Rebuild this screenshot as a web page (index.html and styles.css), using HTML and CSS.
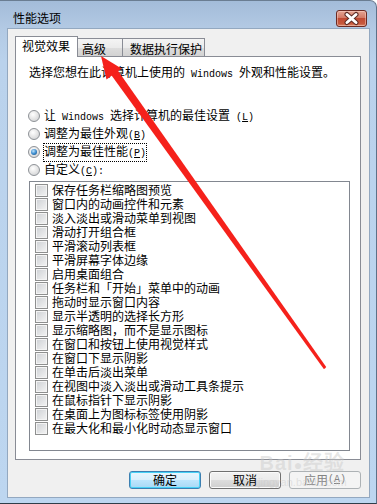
FILE: index.html
```html
<!DOCTYPE html>
<html lang="zh-CN">
<head>
<meta charset="utf-8">
<title>性能选项</title>
<link rel="stylesheet" href="styles.css">
</head>
<body>
<div class="window">
  <div class="titlebar">
    <span class="title">性能选项</span>
    <div class="close">
      <svg width="29" height="15" viewBox="0 0 29 15">
        <path d="M10 3.5 L19 11.5 M19 3.5 L10 11.5" stroke="#5b2a24" stroke-width="5" stroke-linecap="round"/>
        <path d="M10 3.5 L19 11.5 M19 3.5 L10 11.5" stroke="#ffffff" stroke-width="3" stroke-linecap="round"/>
      </svg>
    </div>
  </div>
  <div class="client">
    <div class="tabs">
      <div class="tab active">视觉效果</div>
      <div class="tab t2">高级</div>
      <div class="tab t3">数据执行保护</div>
    </div>
    <div class="panel">
      <p class="intro">选择您想在此计算机上使用的<span class="lat"> Windows </span>外观和性能设置。</p>
      <div class="radios">
        <div class="radio"><span class="rb"></span><span class="rl">让<span class="lat"> Windows </span>选择计算机的最佳设置<span class="lat"> (<u>L</u>)</span></span></div>
        <div class="radio"><span class="rb"></span><span class="rl">调整为最佳外观<span class="lat">(<u>B</u>)</span></span></div>
        <div class="radio"><span class="rb on"></span><span class="rl focus">调整为最佳性能<span class="lat">(<u>P</u>)</span></span></div>
        <div class="radio"><span class="rb"></span><span class="rl">自定义<span class="lat">(<u>C</u>):</span></span></div>
      </div>
      <div class="list">
        <div class="item"><span class="cb"></span>保存任务栏缩略图预览</div>
        <div class="item"><span class="cb"></span>窗口内的动画控件和元素</div>
        <div class="item"><span class="cb"></span>淡入淡出或滑动菜单到视图</div>
        <div class="item"><span class="cb"></span>滑动打开组合框</div>
        <div class="item"><span class="cb"></span>平滑滚动列表框</div>
        <div class="item"><span class="cb"></span>平滑屏幕字体边缘</div>
        <div class="item"><span class="cb"></span>启用桌面组合</div>
        <div class="item"><span class="cb"></span>任务栏和「开始」菜单中的动画</div>
        <div class="item"><span class="cb"></span>拖动时显示窗口内容</div>
        <div class="item"><span class="cb"></span>显示半透明的选择长方形</div>
        <div class="item"><span class="cb"></span>显示缩略图，而不是显示图标</div>
        <div class="item"><span class="cb"></span>在窗口和按钮上使用视觉样式</div>
        <div class="item"><span class="cb"></span>在窗口下显示阴影</div>
        <div class="item"><span class="cb"></span>在单击后淡出菜单</div>
        <div class="item"><span class="cb"></span>在视图中淡入淡出或滑动工具条提示</div>
        <div class="item"><span class="cb"></span>在鼠标指针下显示阴影</div>
        <div class="item"><span class="cb"></span>在桌面上为图标标签使用阴影</div>
        <div class="item"><span class="cb"></span>在最大化和最小化时动态显示窗口</div>
      </div>
    </div>
    <div class="buttons">
      <div class="btn default">确定</div>
      <div class="btn">取消</div>
      <div class="btn disabled">应用<span class="lat">(<u>A</u>)</span></div>
    </div>
  </div>
</div>
<svg class="arrow" width="377" height="504" viewBox="0 0 377 504">
  <polygon points="117.3,69.7 326.2,367.1 325,368.5 323.8,368.9 110.7,74.3" fill="#f5211b"/>
  <polygon points="101,56 121.5,68.5 106.5,79.5" fill="#f5211b"/>
</svg>
<div class="watermark"><span class="wm1">Bai<span class="paw">&#9679;</span>经验</span><span class="wm2">jingyan.baidu.com</span></div>
</body>
</html>
```
FILE: styles.css
```css
html, body {
  margin: 0;
  padding: 0;
}
body {
  width: 377px;
  height: 504px;
  overflow: hidden;
  background: #ffffff;
  font-family: "Noto Sans CJK SC", "Noto Sans", sans-serif;
  font-size: 12px;
  color: #000;
  position: relative;
}
.lat {
  font-family: "Liberation Mono", "DejaVu Sans Mono", monospace;
  font-size: 10px;
}
u {
  text-decoration: underline;
}
.window {
  width: 377px;
  height: 504px;
  box-sizing: border-box;
  display: flex;
  flex-direction: column;
  background: linear-gradient(#a3bcd9, #b3cae4 28px, #bad2ec 60px, #bdd6f0);
  border-top: 1px solid #6a7d92;
  border-right: 1px solid #5d7188;
  border-bottom: 1px solid #2f3d48;
  border-top-right-radius: 7px;
}
.titlebar {
  height: 28px;
  display: flex;
  align-items: flex-start;
  padding: 0 9px 0 13px;
  box-sizing: border-box;
}
.title {
  margin-top: 10px;
  line-height: 14px;
  font-size: 12px;
  color: #000;
}
.close {
  margin-left: auto;
  margin-top: 9px;
  width: 31px;
  height: 17px;
  box-sizing: border-box;
  border: 1px solid #6c2a22;
  border-radius: 3px;
  background: linear-gradient(#e5a594, #d37a66 45%, #c04a33 50%, #c75a3e 85%, #d9896c);
  box-shadow: inset 0 0 0 1px rgba(255, 220, 210, 0.45);
  display: flex;
}
.client {
  flex: 1;
  margin: 0 7px 6px 8px;
  background: #f0f0f0;
  box-shadow: 0 0 0 1px #93a8c0;
  padding: 7px 8px 8px 7px;
  display: flex;
  flex-direction: column;
}
.tabs {
  display: flex;
  align-items: flex-end;
  height: 20px;
  position: relative;
  z-index: 1;
}
.tab {
  box-sizing: border-box;
  height: 18px;
  border: 1px solid #898c95;
  border-bottom: none;
  background: linear-gradient(#f4f4f4, #ebebeb 50%, #dedede 50%, #d2d2d2);
  line-height: 14px;
  padding-top: 3px;
  margin-left: -1px;
  white-space: nowrap;
}
.tab.active {
  position: relative;
  z-index: 2;
  height: 21px;
  width: 63px;
  margin-left: 0;
  margin-bottom: -1px;
  background: #ffffff;
  padding-left: 6px;
  padding-top: 2px;
}
.tab.t2 {
  width: 46px;
  padding-left: 4px;
}
.tab.t3 {
  width: 83px;
  padding-left: 7px;
}
.panel {
  height: 404px;
  box-sizing: border-box;
  border: 1px solid #898c95;
  background: #ffffff;
  padding-left: 12px;
}
.intro {
  margin: 8px 0 0 1px;
  line-height: 14px;
  white-space: nowrap;
}
.radios {
  margin-top: 25px;
  display: flex;
  flex-direction: column;
}
.radio {
  height: 18px;
  display: flex;
  align-items: center;
  white-space: nowrap;
}
.rb {
  width: 12px;
  height: 12px;
  box-sizing: border-box;
  border-radius: 50%;
  border: 1px solid #8e9297;
  background: radial-gradient(circle at 40% 35%, #ffffff, #e8e8e8 45%, #c9cbce);
  margin-right: 4px;
  position: relative;
  flex: none;
}
.rb.on::after {
  content: "";
  position: absolute;
  left: 2px;
  top: 2px;
  width: 6px;
  height: 6px;
  border-radius: 50%;
  background: radial-gradient(circle at 40% 35%, #bfe4fb, #3c8dd0 50%, #12416e);
}
.rl {
  line-height: 14px;
}
.rl.focus {
  outline: 1px dotted #000;
  outline-offset: 0;
}
.list {
  margin: 2px 0 0 1px;
  width: 321px;
  height: 270px;
  box-sizing: border-box;
  border: 1px solid #828790;
  padding: 1px 0 0 5px;
}
.item {
  height: 14px;
  display: flex;
  align-items: center;
  white-space: nowrap;
  line-height: 14px;
}
.cb {
  width: 13px;
  height: 13px;
  box-sizing: border-box;
  border: 1px solid #8e8f8f;
  background: linear-gradient(135deg, #cdd0d4, #f4f4f4);
  box-shadow: inset 0 0 0 1px #f4f4f4;
  margin-right: 4px;
  flex: none;
}
.buttons {
  margin-top: 11px;
  display: flex;
  justify-content: flex-end;
  gap: 8px;
}
.btn {
  width: 72px;
  height: 18px;
  box-sizing: border-box;
  border: 1px solid #707070;
  border-radius: 3px;
  background: linear-gradient(#f2f2f2, #ebebeb 50%, #dddddd 50%, #cfcfcf);
  box-shadow: inset 0 0 0 1px #fbfbfb;
  display: flex;
  align-items: center;
  justify-content: center;
  line-height: 14px;
}
.btn.default {
  border-color: #3c7fb1;
  background: linear-gradient(#eaf6fd, #d9f0fc 50%, #bee6fd 50%, #a7d9f5);
  box-shadow: inset 0 0 0 1px #48d2f6;
}
.btn.disabled {
  border-color: #adb2b5;
  background: #f4f4f4;
  box-shadow: none;
  color: #838383;
}
.arrow {
  position: absolute;
  left: 0;
  top: 0;
  pointer-events: none;
  z-index: 10;
}
.watermark {
  position: absolute;
  left: 258px;
  top: 452px;
  display: flex;
  flex-direction: column;
  align-items: center;
  pointer-events: none;
  z-index: 11;
  color: rgba(200, 200, 200, 0.45);
}
.wm1 {
  font-family: "Liberation Sans", sans-serif;
  font-weight: bold;
  font-size: 20px;
  line-height: 22px;
  letter-spacing: 1px;
}
.paw {
  font-size: 14px;
}
.wm2 {
  font-family: "Liberation Sans", sans-serif;
  font-size: 11px;
  line-height: 12px;
}
```
